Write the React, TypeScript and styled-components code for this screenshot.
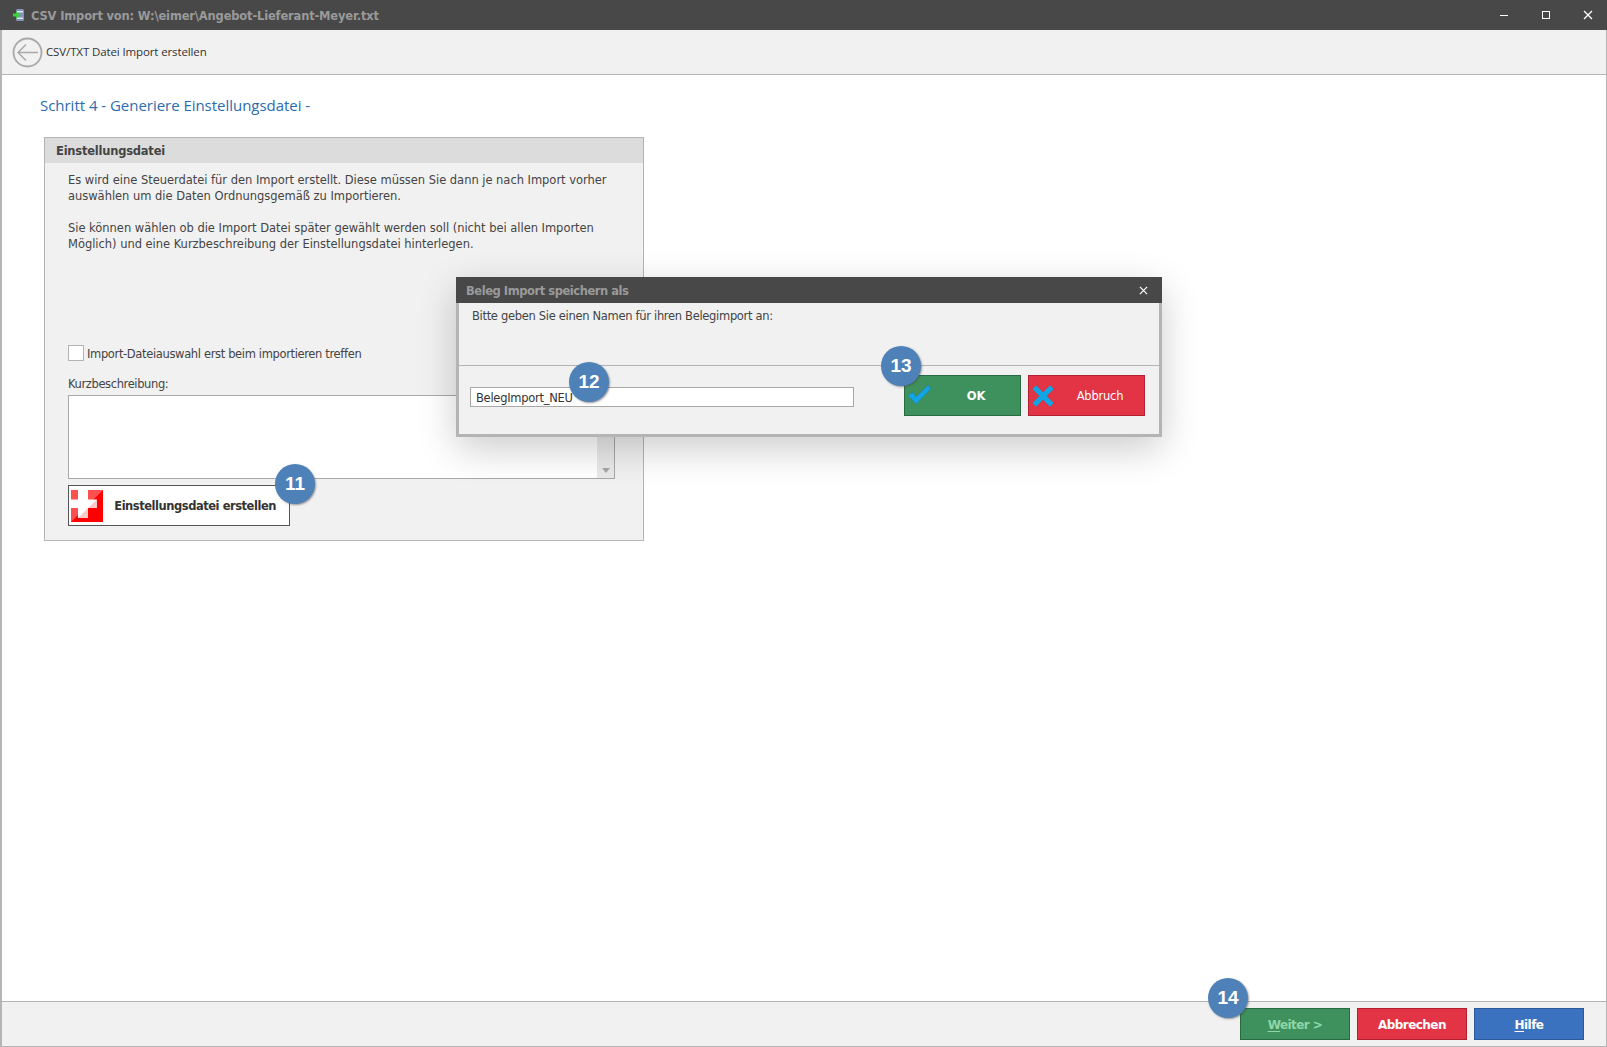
import { createGlobalStyle, styled } from 'styled-components'

const GlobalStyle = createGlobalStyle`
  html, body {
    margin: 0;
    height: 100%;
    background: #fff;
    overflow: hidden;
  }
  * { box-sizing: border-box; }
`

const uiFont = `"DejaVu Sans", "Liberation Sans", sans-serif`

const Shell = styled.div`
  position: relative;
  width: 1607px;
  height: 1047px;
  display: flex;
  flex-direction: column;
  border-left: 2px solid #b4b4b4;
  border-right: 1px solid #b4b4b4;
  border-bottom: 1px solid #b4b4b4;
  background: #fff;
  font-family: ${uiFont};
  font-size: 11.5px;
  letter-spacing: -0.2px;
  color: #444;
`

const TitleBar = styled.div`
  height: 30px;
  margin: 0 -1px 0 -2px;
  padding: 0 0 0 13px;
  background: #484848;
  display: flex;
  align-items: center;
  flex-shrink: 0;
`

const TitleText = styled.span`
  margin: 1px 0 0 7px;
  font-weight: 700;
  font-size: 11.5px;
  letter-spacing: -0.17px;
  color: #9a9a9a;
`

const WindowButtons = styled.div`
  margin: 0 -2px 0 auto;
  display: flex;
  height: 100%;
`

const WindowButton = styled.div`
  width: 42px;
  display: flex;
  align-items: center;
  justify-content: center;
`

const Toolbar = styled.div`
  height: 45px;
  background: #f1f1f1;
  border-bottom: 1px solid #b4b4b4;
  padding-left: 10px;
  display: flex;
  align-items: center;
  gap: 3px;
  flex-shrink: 0;
  font-family: "Open Sans", sans-serif;
  font-size: 11.5px;
  letter-spacing: -0.12px;
  color: #333;
`

const ToolbarLabel = styled.span`
  margin-bottom: 2px;
`

const Content = styled.main`
  flex: 1;
  padding: 20px 0 0 38px;
`

const Heading = styled.h1`
  margin: 0 0 22px;
  font-family: "Open Sans", sans-serif;
  font-weight: 400;
  font-size: 15px;
  line-height: 20px;
  letter-spacing: -0.03px;
  color: #2b6cb0;
`

const Panel = styled.section`
  position: relative;
  margin-left: 4px;
  width: 600px;
  height: 404px;
  border: 1px solid #b4b4b4;
  background: #f1f1f1;
`

const PanelHeader = styled.div`
  height: 25px;
  padding-left: 11px;
  background: #dcdcdc;
  display: flex;
  align-items: center;
  font-weight: 700;
  font-size: 11.5px;
  letter-spacing: -0.22px;
  color: #444;
`

const PanelBody = styled.div`
  padding: 9px 28px 0 23px;
  display: flex;
  flex-direction: column;
`

const Paragraph = styled.p`
  margin: 0 0 16px;
  line-height: 16px;
  letter-spacing: -0.03px;
  white-space: nowrap;
`

const CheckRow = styled.label`
  margin-top: 77px;
  display: flex;
  align-items: center;
  gap: 3px;
  height: 16px;
  letter-spacing: -0.35px;
`

const CheckLabel = styled.span`
  margin-top: 2px;
`

const CheckBox = styled.span`
  width: 16px;
  height: 16px;
  background: #fff;
  border: 1px solid #b4b4b4;
`

const FieldLabel = styled.div`
  margin-top: 15px;
  height: 16px;
  line-height: 16px;
  letter-spacing: -0.38px;
`

const TextArea = styled.div`
  position: relative;
  height: 84px;
  margin-top: 3px;
  border: 1px solid #a8a8a8;
  background: #fff;
`

const ScrollTrack = styled.div`
  position: absolute;
  right: 0;
  top: 0;
  bottom: 0;
  width: 17px;
  background: #e9e9e9;
  display: flex;
  align-items: flex-end;
  justify-content: center;
  padding-bottom: 5px;
`

const ScrollArrow = styled.span`
  width: 0;
  height: 0;
  border-left: 4px solid transparent;
  border-right: 4px solid transparent;
  border-top: 5px solid #a6a6a6;
`

const CreateButton = styled.button`
  margin-top: 6px;
  width: 222px;
  height: 41px;
  padding: 1px 13px 0 2px;
  border: 1px solid #555;
  background: #fff;
  display: flex;
  align-items: center;
  justify-content: space-between;
  font-family: ${uiFont};
  font-weight: 700;
  font-size: 11.5px;
  letter-spacing: -0.46px;
  color: #333;
`

const Footer = styled.footer`
  height: 45px;
  background: #f1f1f1;
  border-top: 1px solid #b4b4b4;
  padding: 6px 22px 0 0;
  display: flex;
  justify-content: flex-end;
  gap: 7px;
  flex-shrink: 0;
`

const tones = {
  green: { bg: '#3e915c', line: '#2a6a42', fg: '#fff' },
  red: { bg: '#e23445', line: '#b02232', fg: '#fff' },
  blue: { bg: '#3a72bf', line: '#2b5a99', fg: '#fff' },
}

type Tone = keyof typeof tones

const FooterButton = styled.button<{ $tone: Tone; $muted?: boolean }>`
  width: 110px;
  height: 32px;
  padding: 2px 0 0;
  border: 1px solid ${p => tones[p.$tone].line};
  background: ${p => tones[p.$tone].bg};
  color: ${p => (p.$muted ? '#8fd6a8' : tones[p.$tone].fg)};
  font-family: ${uiFont};
  font-weight: 700;
  font-size: 12px;
  letter-spacing: -0.55px;
  u { text-underline-offset: 2px; }
`

const Dialog = styled.div`
  position: absolute;
  left: 454px;
  top: 277px;
  width: 706px;
  height: 160px;
  display: flex;
  flex-direction: column;
  background: #f1f1f1;
  border: 3px solid #b4b4b4;
  border-top: 0;
  box-shadow: 0 12px 36px rgba(0, 0, 0, 0.2);
`

const DialogTitle = styled.div`
  height: 26px;
  margin: 0 -3px;
  padding: 1px 14px 0 10px;
  background: #484848;
  display: flex;
  align-items: center;
  justify-content: space-between;
  font-weight: 700;
  font-size: 11.5px;
  letter-spacing: -0.45px;
  color: #9a9a9a;
`

const DialogMessage = styled.div`
  height: 63px;
  padding: 5px 0 0 13px;
  border-bottom: 1px solid #b4b4b4;
  line-height: 16px;
  letter-spacing: -0.31px;
`

const DialogRow = styled.div`
  flex: 1;
  padding: 9px 14px 0 11px;
  display: flex;
  align-items: flex-start;
`

const NameInput = styled.div`
  width: 384px;
  height: 20px;
  margin-top: 12px;
  padding: 2px 0 0 5px;
  border: 1px solid #a8a8a8;
  background: #fff;
  display: flex;
  align-items: center;
  letter-spacing: -0.27px;
  color: #333;
`

const DialogButtons = styled.div`
  margin-left: auto;
  display: flex;
  gap: 7px;
`

const DialogButton = styled.button<{ $tone: Tone; $bold?: boolean }>`
  position: relative;
  width: 117px;
  height: 41px;
  padding: 0 0 0 27px;
  border: 1px solid ${p => tones[p.$tone].line};
  background: ${p => tones[p.$tone].bg};
  color: #fff;
  font-family: ${uiFont};
  font-weight: ${p => (p.$bold ? 700 : 400)};
  font-size: 11.5px;
  letter-spacing: -0.2px;
  svg {
    position: absolute;
    left: 2px;
    top: 8px;
  }
`

const Badge = styled.div<{ $x: number; $y: number }>`
  position: absolute;
  left: ${p => p.$x - 20}px;
  top: ${p => p.$y - 20}px;
  width: 40px;
  height: 40px;
  border-radius: 50%;
  background: #4e81b8;
  box-shadow: 1px 1px 2px rgba(70, 70, 70, 0.55);
  display: flex;
  align-items: center;
  justify-content: center;
  font-family: "Liberation Sans", Arial, sans-serif;
  font-weight: 700;
  font-size: 19px;
  letter-spacing: 0;
  color: #fff;
`

function BackIcon() {
  return (
    <svg width="31" height="31" viewBox="0 0 31 31" fill="none" stroke="#a9a9a9">
      <circle cx="15.5" cy="15.5" r="14" strokeWidth="1.8" />
      <path d="M26 15.5H6M14 7.5L6 15.5l8 8" strokeWidth="1.5" />
    </svg>
  )
}

function AppIcon() {
  return (
    <svg width="11" height="12" viewBox="0 0 11 12">
      <rect x="3" y="0" width="8" height="12" rx="1.5" fill="#8093bb" />
      <rect x="4" y="2" width="6" height="1.5" fill="#e4e9f4" />
      <rect x="4" y="8.5" width="6" height="1.5" fill="#e4e9f4" />
      <path d="M0 4.5h3V2l4.5 4L3 10V7.5H0z" fill="#3fd03f" />
    </svg>
  )
}

function PlusIcon() {
  return (
    <svg width="32" height="32" viewBox="0 0 32 32">
      <rect width="32" height="32" fill="#f00" />
      <path d="M0 0H32L0 32z" fill="#ff5050" />
      <path d="M7 0H17V9.5H26V18H17V28H7V18H0V9.5H7z" fill="#fff" />
      <path d="M26 9.5V18H17V28H7z" fill="#f9c8c8" />
    </svg>
  )
}

function CheckIcon() {
  return (
    <svg width="25" height="21" viewBox="0 0 25 21">
      <path d="M1 12l4-4 4.5 4.5L21 1l3 3.5L9.5 20z" fill="#12a5e6" stroke="#2f7f8c" strokeWidth="0.8" />
    </svg>
  )
}

function CrossIcon() {
  return (
    <svg width="24" height="24" viewBox="0 0 24 24">
      <path
        d="M1 5l4-4 7 7 7-7 4 4-7 7 7 7-4 4-7-7-7 7-4-4 7-7z"
        fill="#12a5e6"
        stroke="#b5404f"
        strokeWidth="0.8"
      />
    </svg>
  )
}

function CloseGlyph({ size = 10 }: { size?: number }) {
  return (
    <svg width={size} height={size} viewBox="0 0 10 10" stroke="#fff" strokeWidth="1.3">
      <path d="M1 1l8 8M9 1L1 9" />
    </svg>
  )
}

function App() {
  return (
    <>
      <GlobalStyle />
      <Shell>
        <TitleBar>
          <AppIcon />
          <TitleText>CSV Import von: W:\eimer\Angebot-Lieferant-Meyer.txt</TitleText>
          <WindowButtons>
            <WindowButton>
              <svg width="10" height="10" viewBox="0 0 10 10" stroke="#fff"><path d="M1 5.5h8" /></svg>
            </WindowButton>
            <WindowButton>
              <svg width="10" height="10" viewBox="0 0 10 10" fill="none" stroke="#fff"><rect x="1.5" y="1.5" width="7" height="7" /></svg>
            </WindowButton>
            <WindowButton>
              <CloseGlyph />
            </WindowButton>
          </WindowButtons>
        </TitleBar>

        <Toolbar>
          <BackIcon />
          <ToolbarLabel>CSV/TXT Datei Import erstellen</ToolbarLabel>
        </Toolbar>

        <Content>
          <Heading>Schritt 4 - Generiere Einstellungsdatei -</Heading>
          <Panel>
            <PanelHeader>Einstellungsdatei</PanelHeader>
            <PanelBody>
              <Paragraph>
                Es wird eine Steuerdatei für den Import erstellt. Diese müssen Sie dann je nach Import vorher
                <br />
                auswählen um die Daten Ordnungsgemäß zu Importieren.
              </Paragraph>
              <Paragraph>
                Sie können wählen ob die Import Datei später gewählt werden soll (nicht bei allen Importen
                <br />
                Möglich) und eine Kurzbeschreibung der Einstellungsdatei hinterlegen.
              </Paragraph>
              <CheckRow>
                <CheckBox />
                <CheckLabel>Import-Dateiauswahl erst beim importieren treffen</CheckLabel>
              </CheckRow>
              <FieldLabel>Kurzbeschreibung:</FieldLabel>
              <TextArea>
                <ScrollTrack>
                  <ScrollArrow />
                </ScrollTrack>
              </TextArea>
              <CreateButton>
                <PlusIcon />
                Einstellungsdatei erstellen
              </CreateButton>
            </PanelBody>
          </Panel>
        </Content>

        <Footer>
          <FooterButton $tone="green" $muted>
            <u>W</u>eiter &gt;
          </FooterButton>
          <FooterButton $tone="red">Abbrechen</FooterButton>
          <FooterButton $tone="blue">
            <u>H</u>ilfe
          </FooterButton>
        </Footer>

        <Dialog>
          <DialogTitle>
            Beleg Import speichern als
            <CloseGlyph size={9} />
          </DialogTitle>
          <DialogMessage>Bitte geben Sie einen Namen für ihren Belegimport an:</DialogMessage>
          <DialogRow>
            <NameInput>BelegImport_NEU</NameInput>
            <DialogButtons>
              <DialogButton $tone="green" $bold>
                <CheckIcon />
                OK
              </DialogButton>
              <DialogButton $tone="red">
                <CrossIcon />
                Abbruch
              </DialogButton>
            </DialogButtons>
          </DialogRow>
        </Dialog>

        <Badge $x={293} $y={484}>11</Badge>
        <Badge $x={587} $y={382}>12</Badge>
        <Badge $x={899} $y={366}>13</Badge>
        <Badge $x={1226} $y={998}>14</Badge>
      </Shell>
    </>
  )
}

export default App
